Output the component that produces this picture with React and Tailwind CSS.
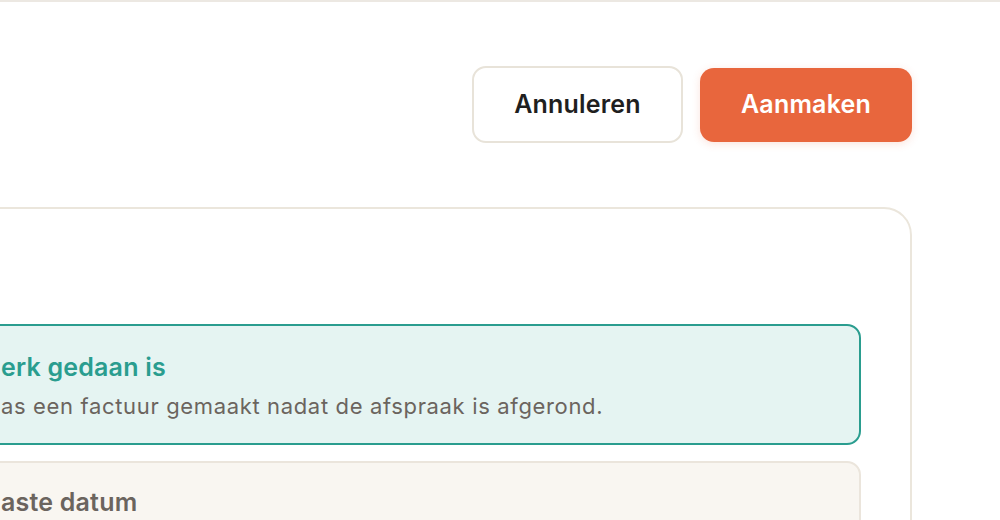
export default function App() {
  const font = { fontFamily: '"Inter", "Noto Sans", sans-serif' };
  return (
    <div
      className="w-[1000px] h-[520px] overflow-hidden bg-white border-t-2 border-[#ece8e2] flex flex-col"
      style={font}
    >
      <div className="flex justify-end items-center gap-[17px] pr-[88px] pt-[64px]">
        <button className="w-[211px] h-[77px] rounded-[14px] border-2 border-[#e8e3d9] bg-white text-[#1f1f1f] text-[25px] font-semibold tracking-[0.2px]">
          Annuleren
        </button>
        <button className="w-[212px] h-[74px] rounded-[14px] bg-[#e8663d] text-white text-[25px] font-semibold tracking-[0.2px] shadow-[0_2px_8px_rgba(232,102,61,0.18)]">
          Aanmaken
        </button>
      </div>
      <div className="ml-[-60px] w-[972px] mt-[64px] rounded-[28px] border-2 border-[#ebe6dc] bg-white pt-[115px] pr-[49px] pl-[20px] flex flex-col gap-[16px] h-[400px]">
        <div className="rounded-[14px] border-2 border-[#2a9d8f] bg-[#e5f4f2] h-[121px] pl-[37px] flex flex-col justify-center gap-[10px]">
          <div className="text-[25px] font-semibold text-[#2a9d8f] leading-[30px] pt-[2px] tracking-[0.2px]">erk gedaan is</div>
          <div className="text-[22px] text-[#6b645e] leading-[28px] tracking-[0.65px]">as een factuur gemaakt nadat de afspraak is afgerond.</div>
        </div>
        <div className="rounded-[14px] border-2 border-[#ebe5dc] bg-[#f9f6f1] h-[121px] pl-[37px] pt-[24px]">
          <div className="text-[25px] font-semibold text-[#6b645e] leading-[30px] tracking-[0.2px]">aste datum</div>
        </div>
      </div>
    </div>
  );
}
